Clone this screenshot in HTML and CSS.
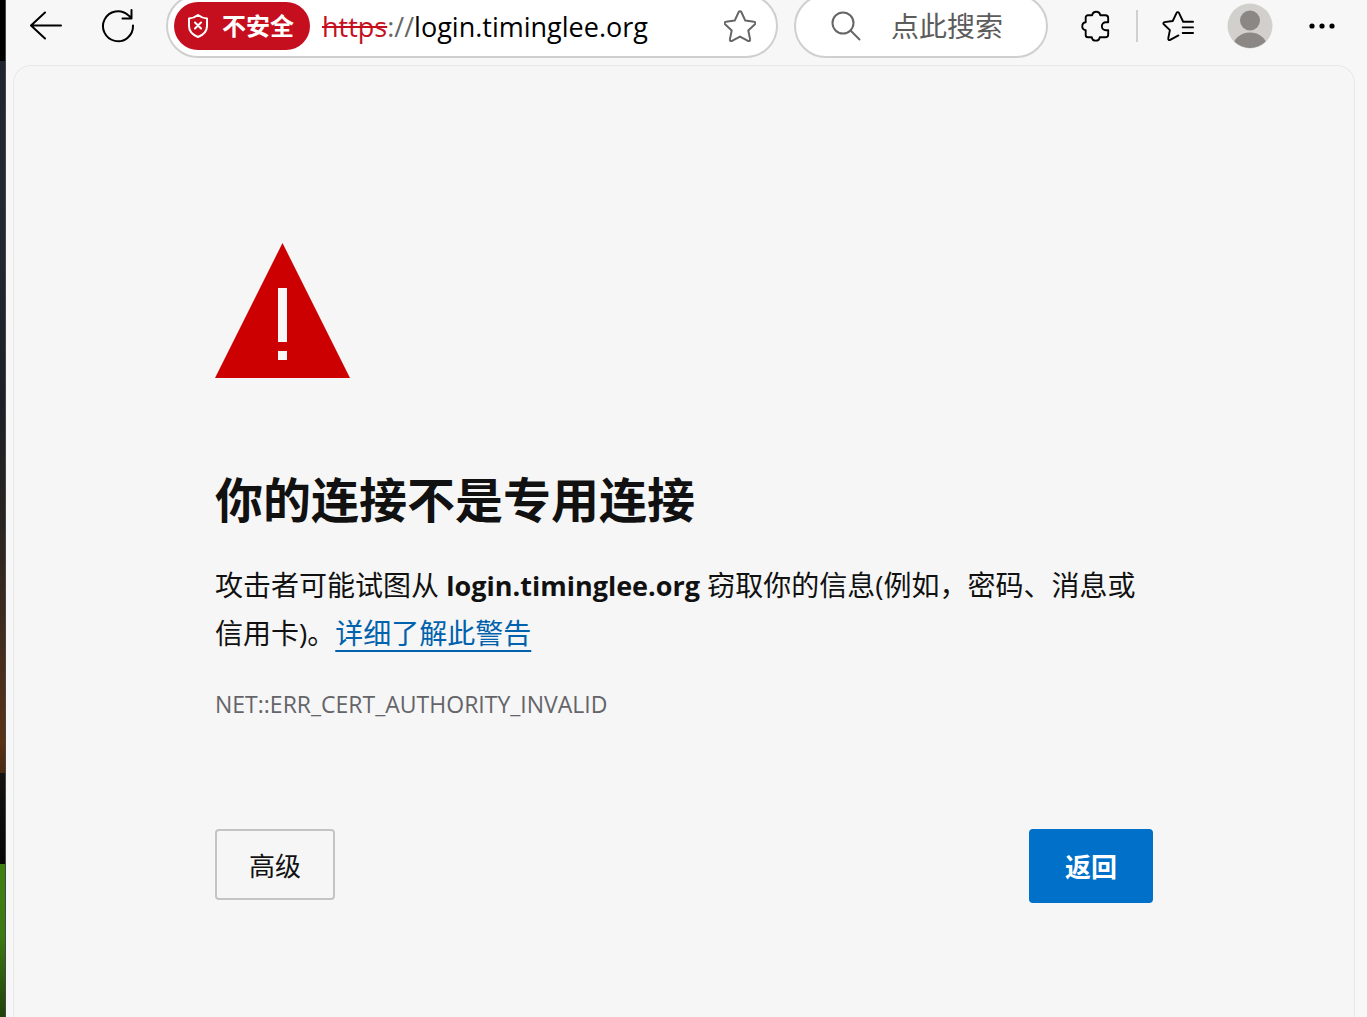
FILE: index.html
```html
<!DOCTYPE html>
<html lang="zh-CN">
<head>
<meta charset="utf-8">
<meta name="viewport" content="width=device-width, initial-scale=1">
<title>隐私错误</title>
<link rel="stylesheet" href="styles.css">
</head>
<body>
<div class="desktop" aria-hidden="true"></div>
<div class="browser">
  <header class="toolbar">
    <button class="tool" type="button" aria-label="后退">
      <svg width="32" height="32" viewBox="0 0 32 32"><path d="M31 15.500H1M15 2.500L1 15.500l14 13"/></svg>
    </button>
    <button class="tool" type="button" aria-label="刷新">
      <svg width="36" height="36" viewBox="0 0 36 36"><path d="M33 17.500a15 15 0 1 1-5-10.500L31 9.500M31.500 2v8.500h-9"/></svg>
    </button>
    <div class="address">
      <button class="badge" type="button">
        <svg width="20" height="24" viewBox="0 0 20 24"><path d="M10 1c3 2.400 5.800 3.300 9 3.500v7.500c0 5-3.500 8.800-9 11-5.500-2.200-9-6-9-11V4.500C4.200 4.300 7 3.400 10 1zM7 8.500l6 6m0-6l-6 6"/></svg>
        <span class="badge-text">不安全</span>
      </button>
      <label class="url" for="url"><s class="scheme">https</s><span class="slashes">://</span></label>
      <input class="host" id="url" type="text" value="login.timinglee.org" spellcheck="false">
      <button class="favorite" type="button" aria-label="收藏">
        <svg width="32" height="32" viewBox="1 1 32 32"><path d="M15.700 3a1.500 1.500 0 0 1 2.600 0l4 8.600 8.800 1.100a1.400 1.400 0 0 1 .8 2.500l-6.600 6.300 1.800 8.900a1.400 1.400 0 0 1-2.100 1.500L17 27.600l-8 4.300a1.400 1.400 0 0 1-2.100-1.500l1.800-8.900-6.600-6.300a1.400 1.400 0 0 1 .8-2.500l8.800-1.100z"/></svg>
      </button>
    </div>
    <div class="search">
      <svg width="30" height="30" viewBox="0 0 30 30" aria-hidden="true"><circle cx="12" cy="12" r="10.500"/><path d="M19.500 19.500l9 9"/></svg>
      <input class="query" type="search" placeholder="点此搜索" aria-label="搜索">
    </div>
    <div class="tools">
      <button class="tool" type="button" aria-label="扩展">
        <svg width="30" height="32" viewBox="0 0 32 34"><path d="M7.500 5.500H12a4.300 4.300 0 0 1 8.500 0h5.500a3 3 0 0 1 3 3v4.500h-2.500a4.200 4.200 0 0 0 0 8.500h2.500v4.500a3 3 0 0 1-3 3h-6a4.300 4.300 0 0 1-8.500 0h-4a2.500 2.500 0 0 1-2.500-2.500v-5a4.300 4.300 0 0 1 0-8.500V8a2.500 2.500 0 0 1 2.500-2.500z"/></svg>
      </button>
      <span class="divider"></span>
      <button class="tool" type="button" aria-label="收藏夹">
        <svg width="32" height="32" viewBox="0 0 34 34"><path d="M33 12.500H22.500L18 3a1.400 1.400 0 0 0-2.500 0l-4.100 8.700-8.800 1.200a1.300 1.300 0 0 0-.7 2.300l6.500 6.200-1.800 8.900a1.400 1.400 0 0 0 2.100 1.500l8.800-4.800M22 18.500h11M22 24.500h11"/></svg>
      </button>
      <button class="tool" type="button" aria-label="个人资料">
        <svg class="avatar" width="46" height="46" viewBox="0 0 46 46"><defs><clipPath id="face"><circle cx="23" cy="23" r="22"/></clipPath></defs><circle cx="23" cy="23" r="22.500" fill="#d1d0cd"/><g clip-path="url(#face)" fill="#8a8784"><circle cx="23" cy="17.500" r="10"/><ellipse cx="23" cy="44" rx="17" ry="14.500"/></g></svg>
      </button>
      <button class="tool" type="button" aria-label="设置及其他">
        <svg class="dots" width="26" height="6" viewBox="0 0 26 6"><circle cx="3" cy="3" r="2.600"/><circle cx="13" cy="3" r="2.600"/><circle cx="23" cy="3" r="2.600"/></svg>
      </button>
    </div>
  </header>
  <main class="page">
    <div class="interstitial">
      <svg class="warning" width="135" height="135" viewBox="0 0 135 135" aria-hidden="true"><path d="M67.500 0L135 135H0z" fill="#c00"/><path d="M63 45h9v54h-9zM63 108h9v9h-9z" fill="#f7f7f7"/></svg>
      <h1 class="title">你的连接不是专用连接</h1>
      <p class="message">攻击者可能试图从 <strong>login.timinglee.org</strong> 窃取你的信息(例如，密码、消息或信用卡)。<a class="more" href="#">详细了解此警告</a></p>
      <p class="code">NET::ERR_CERT_AUTHORITY_INVALID</p>
      <div class="actions">
        <button class="button secondary" type="button">高级</button>
        <button class="button primary" type="button">返回</button>
      </div>
    </div>
  </main>
</div>
</body>
</html>
```
FILE: styles.css
```css
* {
  box-sizing: border-box;
}

body {
  display: flex;
  min-height: 100vh;
  margin: 0;
  overflow-x: hidden;
  background: #f7f7f7;
  color: #111;
  font-family: "Open Sans", "Noto Sans CJK SC", sans-serif;
}

button,
input {
  margin: 0;
  padding: 0;
  border: 0;
  outline: 0;
  background: none;
  color: inherit;
  font: inherit;
}

svg {
  display: block;
  flex: none;
  fill: none;
  stroke: currentColor;
  stroke-width: 2;
  stroke-linecap: round;
  stroke-linejoin: round;
}

/* Sliver of the desktop wallpaper left of the window */
.desktop {
  flex: none;
  width: 6px;
  border-right: 1px solid #45454a;
  background: linear-gradient(#000 6%, #1f2430 6%, #232833 20%, #1c2026 40%, #2a2420 52%, #4a2e1a 66%, #5a3214 73%, #4a2a10 76%, #15120f 76%, #050505 85%, #3f8010 85%, #3c7a12 92%, #1f4208 100%);
}

.browser {
  display: flex;
  flex: 1;
  flex-direction: column;
  min-width: 0;
}

/* The top edge of the toolbar runs past the window */
.toolbar {
  display: flex;
  align-items: center;
  height: 64px;
  margin-top: -6px;
  padding: 0 9px 0 4px;
  color: #000;
}

.tool {
  display: flex;
  flex: none;
  align-items: center;
  justify-content: center;
  width: 72px;
  height: 64px;
}

.address,
.search {
  display: flex;
  align-items: center;
  height: 64px;
  border: 2px solid #cfcfcf;
  border-radius: 32px;
  background: #fff;
}

.address {
  flex: 1;
  min-width: 0;
  margin-left: 12px;
  padding: 0 20px 0 6px;
  font-size: 27px;
}

.badge {
  display: flex;
  flex: none;
  align-items: center;
  gap: 14px;
  height: 48px;
  margin-right: 12px;
  padding: 0 16px 0 14px;
  border-radius: 24px;
  background: #c50f1f;
  color: #fff;
  font-size: 24px;
  font-weight: 700;
}

.badge-text {
  padding-bottom: 4px;
}

.url {
  white-space: nowrap;
}

.scheme {
  color: #c50f1f;
}

.slashes {
  color: #666;
}

.host {
  flex: 1;
  min-width: 0;
}

.favorite {
  color: #666;
}

.search {
  flex: none;
  gap: 30px;
  width: 254px;
  margin: 0 12px 0 16px;
  padding: 0 20px 0 35px;
  color: #666;
  font-size: 28px;
}

.query {
  flex: 1;
  min-width: 0;
}

.query::placeholder {
  color: #5c5c5c;
}

.tools {
  display: flex;
  align-items: center;
}

.divider {
  width: 2px;
  height: 32px;
  margin: 0 4px;
  background: #d0d0d0;
}

.avatar {
  stroke: none;
}

.dots {
  fill: currentColor;
  stroke: none;
}

.page {
  flex: 1;
  margin: 7px 12px 0 7px;
  padding: 177px 24px 40px;
  border: 1px solid #e8e8e8;
  border-bottom: 0;
  border-radius: 18px 18px 0 0;
  background: #f6f6f6;
}

.interstitial {
  max-width: 938px;
  margin: 0 auto;
}

.warning {
  stroke: none;
}

.title {
  margin: 90px 0 29px;
  font-size: 48px;
  font-weight: 700;
  line-height: 64px;
}

.message {
  margin: 0;
  font-size: 28px;
  line-height: 48px;
}

.message strong {
  font-size: 27px;
  line-height: 28px;
}

.more {
  color: #0062ad;
  text-decoration: underline 2px;
  text-decoration-skip-ink: none;
  text-underline-offset: 6px;
}

.code {
  margin: 29px 0 0;
  color: #646469;
  font-size: 23px;
  line-height: 36px;
}

.actions {
  display: flex;
  align-items: flex-start;
  justify-content: space-between;
  margin-top: 107px;
}

.button {
  border-radius: 4px;
  font-size: 26px;
}

.secondary {
  width: 120px;
  height: 71px;
  border: 2px solid #c4c4c4;
}

.primary {
  width: 124px;
  height: 74px;
  background: #0070c9;
  color: #fff;
  font-weight: 700;
}
```
